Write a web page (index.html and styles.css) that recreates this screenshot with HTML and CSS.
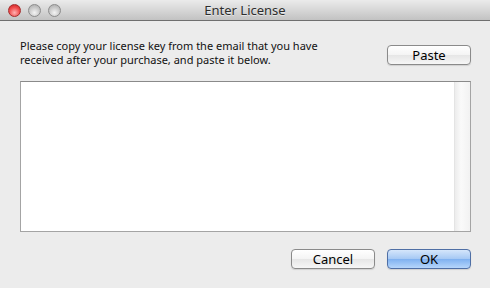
FILE: index.html
```html
<!DOCTYPE html>
<html>
<head>
  <title>Enter License</title>
  <link rel="stylesheet" href="styles.css">
</head>
<body>
  <div class="window">
    <div class="titlebar">
      <div class="lights">
        <span class="light close"></span>
        <span class="light"></span>
        <span class="light"></span>
      </div>
      <span class="title">Enter License</span>
    </div>
    <div class="content">
      <div class="intro">
        <p class="message">Please copy your license key from the email that you have received after your purchase, and paste it below.</p>
        <button class="btn">Paste</button>
      </div>
      <div class="keybox">
        <div class="keytext"></div>
        <div class="scrolltrack"></div>
      </div>
      <div class="actions">
        <button class="btn">Cancel</button>
        <button class="btn default">OK</button>
      </div>
    </div>
  </div>
</body>
</html>
```

FILE: styles.css
```css
html, body {
  margin: 0;
  padding: 0;
}
body {
  font-family: "Noto Sans", "DejaVu Sans", sans-serif;
  background: #ececec;
  color: #000;
}
.window {
  width: 490px;
  height: 288px;
  background: #ececec;
  display: flex;
  flex-direction: column;
}
.titlebar {
  height: 21px;
  flex: none;
  display: flex;
  align-items: center;
  justify-content: center;
  position: relative;
  background: linear-gradient(#ebebeb, #d3d3d3 60%, #c2c2c2);
  border-bottom: 1px solid #6f6f6f;
  box-sizing: border-box;
}
.lights {
  position: absolute;
  left: 8px;
  top: 4px;
  display: flex;
  gap: 7px;
}
.light {
  width: 13px;
  height: 13px;
  border-radius: 50%;
  box-sizing: border-box;
  border: 1px solid #8c8c8c;
  background: radial-gradient(circle at 50% 70%, #f4f4f4, #c4c4c4 60%, #a8a8a8);
}
.light.close {
  border-color: #a52b2b;
  background: radial-gradient(circle at 50% 70%, #ffb2b2, #f04b4b 55%, #c41d1d);
}
.title {
  font-size: 13px;
  color: #2d2d2d;
  text-shadow: 0 1px 0 rgba(255, 255, 255, 0.5);
}
.content {
  flex: 1;
  display: flex;
  flex-direction: column;
  padding: 18px 19px 0 20px;
}
.intro {
  display: flex;
  justify-content: space-between;
  align-items: flex-start;
  height: 42px;
}
.message {
  margin: 0;
  width: 320px;
  font-size: 11px;
  line-height: 14px;
  color: #111;
}
.btn {
  width: 84px;
  height: 20px;
  padding: 0;
  font-family: inherit;
  font-size: 13px;
  line-height: 18px;
  color: #000;
  border: 1px solid #8a8a8a;
  border-radius: 4px;
  background: linear-gradient(#ffffff, #f4f4f4 50%, #e6e6e6 51%, #f6f6f6);
  box-shadow: 0 1px 1px rgba(0, 0, 0, 0.12);
}
.intro .btn {
  margin-top: 6px;
}
.keybox {
  height: 149px;
  display: flex;
  border: 1px solid #a4a4a4;
  border-top-color: #8a8a8a;
  background: #fff;
}
.keytext {
  flex: 1;
}
.scrolltrack {
  width: 15px;
  border-left: 1px solid #e4e4e4;
  background: linear-gradient(to right, #ececec, #fafafa 40%, #f2f2f2);
}
.actions {
  display: flex;
  justify-content: flex-end;
  gap: 12px;
  margin-top: 17px;
}
.btn.default {
  border-color: #4f6fa5;
  background: linear-gradient(#d5e6fb, #a5c8f4 50%, #7fb1f0 51%, #b6d6fb);
}
```
